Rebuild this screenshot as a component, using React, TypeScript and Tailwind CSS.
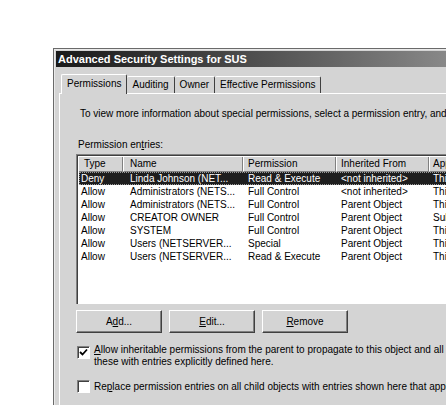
const rows = [
  { type: "Deny", name: "Linda Johnson (NET...", perm: "Read & Execute", from: "<not inherited>", applies: "This folder, subfolders and files", selected: true },
  { type: "Allow", name: "Administrators (NETS...", perm: "Full Control", from: "<not inherited>", applies: "This folder, subfolders and files" },
  { type: "Allow", name: "Administrators (NETS...", perm: "Full Control", from: "Parent Object", applies: "This folder, subfolders and files" },
  { type: "Allow", name: "CREATOR OWNER", perm: "Full Control", from: "Parent Object", applies: "Subfolders and files only" },
  { type: "Allow", name: "SYSTEM", perm: "Full Control", from: "Parent Object", applies: "This folder, subfolders and files" },
  { type: "Allow", name: "Users (NETSERVER...", perm: "Special", from: "Parent Object", applies: "This folder and subfolders" },
  { type: "Allow", name: "Users (NETSERVER...", perm: "Read & Execute", from: "Parent Object", applies: "This folder, subfolders and files" },
];

const tabs = ["Auditing", "Owner", "Effective Permissions"];

function Checkbox({ checked }: { checked?: boolean }) {
  return (
    <div className="w-[13px] h-[13px] shrink-0 bg-white border-t border-l border-[#808080] border-r border-b border-r-white border-b-white shadow-[inset_1px_1px_0_#404040] flex items-center justify-center">
      {checked && (
        <svg width="9" height="9" viewBox="0 0 9 9">
          <path d="M1 4 L3.5 6.5 L8 1.5" fill="none" stroke="#000" strokeWidth="1.8" />
        </svg>
      )}
    </div>
  );
}

function Button({ children }: { children: React.ReactNode }) {
  return (
    <div className="w-[86px] h-[23px] shrink-0 flex items-center justify-center bg-[#d4d4d4] border-t border-l border-white border-r border-b border-r-[#404040] border-b-[#404040] shadow-[inset_-1px_-1px_0_#808080]">
      {children}
    </div>
  );
}

export default function App() {
  return (
    <div className="w-[446px] h-[405px] overflow-hidden bg-white font-['Liberation_Sans',Arial,sans-serif] text-[10px] text-black">
      <div className="ml-[53px] mt-[48px] w-[480px] h-[400px] border-l border-t border-[#6a6a6a] bg-[#d4d4d4]">
        <div className="border-l border-t border-[#eaeaea] pl-px pt-px h-full">
          <div className="h-[16px] bg-gradient-to-r from-[#1a1a1a] to-[#a4a4a4] text-white font-bold text-[11px] leading-[16px] pl-[2px]">
            Advanced Security Settings for SUS
          </div>
          <div className="pl-[3px]">
            <div className="flex items-end h-[26px] pl-[2px]">
              <div className="relative z-10 -mb-px h-[20px] px-[5px] leading-[18px] bg-[#d4d4d4] border-l border-t border-white border-r border-r-[#404040] rounded-t-[2px]">
                Permissions
              </div>
              {tabs.map((t) => (
                <div key={t} className="h-[17px] px-[5px] leading-[16px] border-t border-white border-r border-r-[#404040] rounded-t-[2px]">
                  {t}
                </div>
              ))}
            </div>
            <div className="border-l border-t border-white pl-[16px] pt-[13px] h-[320px]">
              <div className="pl-[4px] leading-[13px] whitespace-nowrap">
                To view more information about special permissions, select a permission entry, and then click Edit.
              </div>
              <div className="pl-[2px] mt-[18px] leading-[13px]">
                Permission en<span className="underline">t</span>ries:
              </div>
              <div className="mt-[3px] w-[420px] h-[150px] overflow-hidden bg-white border-t border-l border-[#808080] shadow-[inset_1px_1px_0_#404040] pl-[2px] pt-[2px]">
                <div className="flex h-[15px] leading-[14px] bg-[#d4d4d4] whitespace-nowrap">
                  <div className="w-[44px] shrink-0 pl-[5px] border-r border-b border-[#808080]">Type</div>
                  <div className="w-[120px] shrink-0 pl-[6px] border-l border-white border-r border-b border-r-[#808080] border-b-[#808080]">Name</div>
                  <div className="w-[93px] shrink-0 pl-[4px] border-l border-white border-r border-b border-r-[#808080] border-b-[#808080]">Permission</div>
                  <div className="w-[93px] shrink-0 pl-[4px] border-l border-white border-r border-b border-r-[#808080] border-b-[#808080]">Inherited From</div>
                  <div className="w-[140px] shrink-0 pl-[3px] border-l border-white border-b border-b-[#808080]">Apply To</div>
                </div>
                {rows.map((r, i) => (
                  <div
                    key={i}
                    className={
                      r.selected
                        ? "flex w-max h-[13px] leading-[13px] bg-[#1e1e1e] text-white outline outline-1 outline-dotted outline-[#9a9a9a] -outline-offset-1 whitespace-nowrap"
                        : "flex w-max h-[13px] leading-[13px] whitespace-nowrap"
                    }
                  >
                    <div className="w-[44px] shrink-0 pl-[2px]">{r.type}</div>
                    <div className="w-[120px] shrink-0 pl-[7px]">{r.name}</div>
                    <div className="w-[93px] shrink-0 pl-[5px]">{r.perm}</div>
                    <div className="w-[93px] shrink-0 pl-[5px]">{r.from}</div>
                    <div className="w-[140px] shrink-0 pl-[4px]">{r.applies}</div>
                  </div>
                ))}
              </div>
              <div className="flex gap-[7px] mt-[6px]">
                <Button>
                  A<span className="underline">d</span>d...
                </Button>
                <Button>
                  <span className="underline">E</span>dit...
                </Button>
                <Button>
                  <span className="underline">R</span>emove
                </Button>
              </div>
              <div className="flex gap-[4px] mt-[11px] pl-px leading-[12px] whitespace-nowrap">
                <div className="pt-[2px]">
                  <Checkbox checked />
                </div>
                <div>
                  <div>
                    <span className="underline">A</span>llow inheritable permissions from the parent to propagate to this object and all child objects. Include
                  </div>
                  <div>these with entries explicitly defined here.</div>
                </div>
              </div>
              <div className="flex items-center gap-[4px] mt-[12px] pl-px leading-[12px] whitespace-nowrap">
                <Checkbox />
                <div>
                  Re<span className="underline">p</span>lace permission entries on all child objects with entries shown here that apply to child objects
                </div>
              </div>
            </div>
          </div>
        </div>
      </div>
    </div>
  );
}
